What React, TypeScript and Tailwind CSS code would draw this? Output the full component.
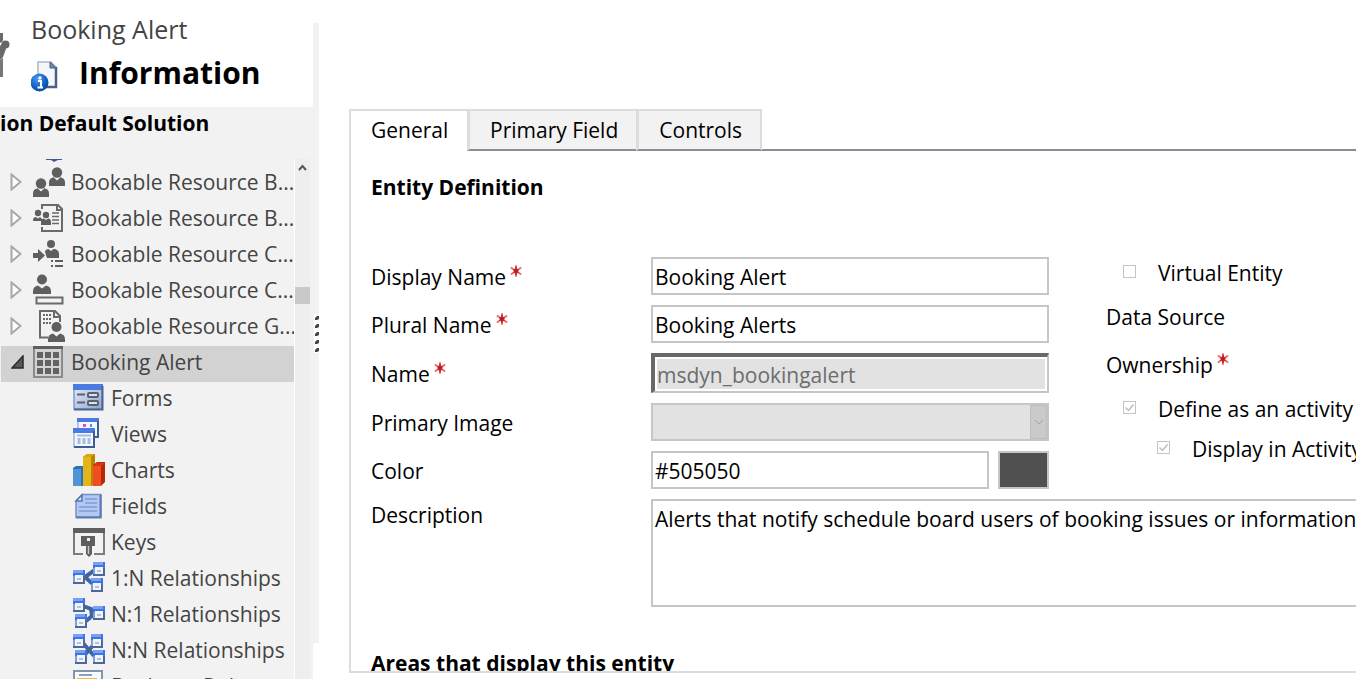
import { useState } from "react"
import type { ReactNode } from "react"

interface TreeItem {
  label: string
  icon: ReactNode
}

function Person({ x, y }: { x: number; y: number }) {
  return (
    <g transform={`translate(${x} ${y})`} fill="#5f5f5f">
      <circle cx="8" cy="5.500" r="5.200" />
      <path d="M0 19v-3.500c0-3 1.500-4.500 4.500-5.200L8 13.500l3.500-3.200c3 .7 4.500 2.200 4.500 5.200V19z" />
    </g>
  )
}

function BookingIcon() {
  return (
    <svg viewBox="0 0 32 32" className="size-8 shrink-0" aria-hidden="true">
      <Person x={16} y={1} />
      <Person x={0} y={12} />
    </svg>
  )
}

function BookingHeaderIcon() {
  return (
    <svg viewBox="0 0 32 32" className="size-8 shrink-0" aria-hidden="true">
      <path d="M9 7V3h16l4 4v22H9v-4M24 3v5h5" fill="none" stroke="#6a6a6a" strokeWidth="2" />
      <path d="M19 11h7M19 14.500h7M19 18h7M19 21.500h7" stroke="#6a6a6a" strokeWidth="1.500" />
      <g fill="#5f5f5f">
        <circle cx="5" cy="11" r="3.200" />
        <circle cx="13" cy="13" r="3.200" />
        <path d="M0 19c0-3 1-4 3-4l2 1.500L7 15l2 2-1 2H0zM8 23v-3c0-2 1-3.500 3-3.500l2 1.500 2-1.500c2 0 3 1.500 3 3.500v3z" />
      </g>
    </svg>
  )
}

function CategoryAssnIcon() {
  return (
    <svg viewBox="0 0 32 32" className="size-8 shrink-0" aria-hidden="true">
      <g fill="#5f5f5f">
        <circle cx="18" cy="6" r="4" />
        <path d="M12 14c0-2 2-3 3.500-3L18 13l2.500-2c3 0 5.500 1.500 5.500 5v4H14z" />
        <path d="M0 15h5v-4l7 6.500-7 6.500v-4H0z" />
        <path d="M18 22h2v2h-2zM22 22h8v2h-8zM18 27h2v2h-2zM22 27h8v2h-8z" />
      </g>
    </svg>
  )
}

function CategoryIcon() {
  return (
    <svg viewBox="0 0 32 32" className="size-8 shrink-0" aria-hidden="true">
      <circle cx="9" cy="5.500" r="5" fill="#5f5f5f" />
      <path d="M0 20v-3c0-3 2-5 5-5.500l4 3 4-3c3 .5 5 2.500 5 5.500v3z" fill="#5f5f5f" />
      <rect x="3.500" y="23.500" width="26" height="6" fill="#f2f2f2" stroke="#6a6a6a" strokeWidth="2" />
    </svg>
  )
}

function GroupIcon() {
  return (
    <svg viewBox="0 0 32 32" className="size-8 shrink-0" aria-hidden="true">
      <path d="M15 27.500H7V1h15l5 5v6M21 1v6h6" fill="none" stroke="#6a6a6a" strokeWidth="2" />
      <path d="M10 5h8M10 9h8M10 13h8" stroke="#6a6a6a" strokeWidth="2" strokeDasharray="2 1" />
      <circle cx="23.500" cy="17" r="5" fill="#5f5f5f" />
      <path d="M15 32v-3c0-3 2-5 5-5.500l3.500 3 3.500-3c3 .5 5 2.500 5 5.500v3z" fill="#5f5f5f" />
    </svg>
  )
}

function EntityIcon() {
  return (
    <svg viewBox="0 0 32 32" className="size-8 shrink-0" aria-hidden="true">
      <rect x="1" y="1" width="28" height="30" fill="none" stroke="#8a8a8a" strokeWidth="2" />
      <rect x="0" y="0" width="30" height="3" fill="#5f5f5f" />
      <g fill="#626262">
        <path d="M4 6h6v6H4zM12 6h6v6h-6zM20 6h6v6h-6zM4 14h6v6H4zM12 14h6v6h-6zM20 14h6v6h-6zM4 22h6v6H4zM12 22h6v6h-6zM20 22h6v6h-6z" />
      </g>
    </svg>
  )
}

function FormsIcon() {
  return (
    <svg viewBox="0 0 32 32" className="size-8 shrink-0" aria-hidden="true">
      <defs>
        <linearGradient id="form-body" x2="1" y2="1">
          <stop offset="0" stopColor="#e6edf9" />
          <stop offset="1" stopColor="#8fa5d0" />
        </linearGradient>
      </defs>
      <rect x="1" y="3" width="28" height="24" fill="url(#form-body)" stroke="#7f9bcf" strokeWidth="1.500" />
      <rect x="0" y="2" width="30" height="6" fill="#4a7be0" />
      <path d="M1 27.500h28.500V4" fill="none" stroke="#4a6294" strokeWidth="2" />
      <path d="M4 12.500h8M4 20.500h8" stroke="#59616e" strokeWidth="2" />
      <rect x="15" y="11" width="10" height="4" rx="1" fill="#dde3ec" stroke="#59616e" strokeWidth="2" />
      <rect x="15" y="19" width="10" height="4" rx="1" fill="#dde3ec" stroke="#59616e" strokeWidth="2" />
    </svg>
  )
}

function ViewsIcon() {
  return (
    <svg viewBox="0 0 32 32" className="size-8 shrink-0" aria-hidden="true">
      <rect x="5" y="1" width="20" height="18" fill="#f3f7ff" stroke="#7595cf" />
      <rect x="4" y="0" width="22" height="4" fill="#4a7be0" />
      <path d="M25 3v16h-4" fill="none" stroke="#405d93" strokeWidth="2" />
      <rect x="10" y="6" width="3" height="3" fill="#ef47cf" />
      <path d="M18 9V6" stroke="#4b8ff0" strokeWidth="2" />
      <rect x="1" y="11" width="20" height="18" fill="#f3f7ff" stroke="#7595cf" />
      <rect x="0" y="10" width="22" height="5" fill="#4a7be0" />
      <path d="M1 29h20V13" fill="none" stroke="#405d93" strokeWidth="2" />
      <path d="M4 17.500h14" stroke="#a8bddd" strokeWidth="2" />
      <path d="M6 20v6M11 20v6M16 20v6" stroke="#a8bddd" strokeWidth="3" />
    </svg>
  )
}

function ChartsIcon() {
  return (
    <svg viewBox="0 0 32 32" className="size-8 shrink-0" aria-hidden="true">
      <path d="M0 14l3-2h8v20H0z" fill="#2c6fb8" />
      <path d="M0 15h8v17H0z" fill="#4f95d8" />
      <path d="M10 3l4-3h8v29l-3 3h-9z" fill="#b98300" />
      <path d="M10 3h8v29h-8z" fill="#e0b618" />
      <path d="M10 3l4-3h8l-4 3z" fill="#d9a70b" />
      <path d="M20 11l4-3h8v20l-4 4h-8z" fill="#b72808" />
      <path d="M20 12h8v20h-8z" fill="#f24c22" />
      <path d="M20 12l4-3h8l-4 3z" fill="#d83a14" />
    </svg>
  )
}

function FieldsIcon() {
  return (
    <svg viewBox="0 0 32 32" className="size-8 shrink-0" aria-hidden="true">
      <path d="M9 4.500h19V27H3V11z" fill="#b3c8f0" stroke="#7690c5" strokeWidth="1.500" />
      <path d="M3 27.500h24.500V5" fill="none" stroke="#5d79b3" strokeWidth="2" />
      <path d="M3 11h6V5z" fill="#e3ebfa" stroke="#5876b4" strokeWidth="1.500" />
      <path d="M12 9h12M12 13h12M6 17h18M6 21h18" stroke="#7e9ad4" strokeWidth="1.500" />
    </svg>
  )
}

function KeysIcon() {
  return (
    <svg viewBox="0 0 32 32" className="size-8 shrink-0" aria-hidden="true">
      <path d="M10 28H1V4h30v24H21" fill="none" stroke="#7c7c7c" strokeWidth="2" />
      <rect x="0" y="2" width="32" height="5" fill="#5f5f5f" />
      <path d="M8 10h14v10h-3v8l-3 3-3-3v-8H8z" fill="#5f5f5f" />
      <rect x="14" y="12" width="3" height="3" fill="#f2f2f2" />
      <path d="M15.500 20v8" stroke="#c5c5c5" strokeWidth="1.500" />
    </svg>
  )
}

function RelationBox({ x, y }: { x: number; y: number }) {
  return (
    <g transform={`translate(${x} ${y})`}>
      <rect width="12" height="14" fill="#4c6798" />
      <rect width="12" height="6" fill="#3f74e6" />
      <rect width="10" height="3" fill="#78a0f5" />
      <rect y="6" width="2" height="6" fill="#7f9ed6" />
      <rect x="2" y="5" width="8" height="7" fill="#f1f5fc" />
      <rect x="4" y="8" width="4" height="2" fill="#b4c1da" />
    </g>
  )
}

function RelationIcon({ links, boxes }: { links: string; boxes: number[][] }) {
  return (
    <svg viewBox="0 0 32 32" className="size-8 shrink-0" aria-hidden="true">
      <path d={links} stroke="#41639f" strokeWidth="4" fill="none" />
      {boxes.map(([x, y]) => (
        <RelationBox key={`${x}-${y}`} x={x} y={y} />
      ))}
    </svg>
  )
}

function RulesIcon() {
  return (
    <svg viewBox="0 0 32 32" className="size-8 shrink-0" aria-hidden="true">
      <rect x="1" y="1" width="28" height="30" fill="#f7faff" stroke="#8195ad" strokeWidth="2" />
      <path d="M6 5h13" stroke="#8da0b8" strokeWidth="2" />
      <path d="M4 9.500h20" stroke="#f4b45e" strokeWidth="3" />
    </svg>
  )
}

function InfoDocIcon() {
  return (
    <svg viewBox="0 0 28 32" className="mt-2 h-8 w-7 shrink-0" aria-hidden="true">
      <defs>
        <radialGradient id="info-ball" cx="40%" cy="30%" r="75%">
          <stop offset="0" stopColor="#4a9cf0" />
          <stop offset="0.600" stopColor="#1262c4" />
          <stop offset="1" stopColor="#0a4690" />
        </radialGradient>
      </defs>
      <path d="M7 1h13l5 5v20H7z" fill="#f4f7fb" stroke="#a9b8cb" strokeWidth="1.500" />
      <path d="M25 6v20H14" fill="none" stroke="#4a607f" strokeWidth="2.500" />
      <path d="M19 1v6h6z" fill="#7489a5" stroke="#4a607f" />
      <circle cx="8.500" cy="21.500" r="9" fill="url(#info-ball)" />
      <circle cx="9" cy="17" r="1.700" fill="#fff" />
      <path d="M7 20h3v6M6.500 26.500h5.500" fill="none" stroke="#fff" strokeWidth="2" />
    </svg>
  )
}

function Required() {
  return (
    <svg viewBox="0 0 12 12" className="mb-3 ml-1 size-3" role="img" aria-label="required">
      <path d="M6 1v10M1.500 3l9 6M10.500 3l-9 6" stroke="#e0706a" strokeWidth="2" strokeLinecap="round" />
      <path d="M6 2v8M3.500 4.500l5 3M8.500 4.500l-5 3" stroke="#c4161c" strokeWidth="1.500" />
    </svg>
  )
}

const entities: TreeItem[] = [
  { label: "Bookable Resource B...", icon: <BookingIcon /> },
  { label: "Bookable Resource B...", icon: <BookingHeaderIcon /> },
  { label: "Bookable Resource C...", icon: <CategoryAssnIcon /> },
  { label: "Bookable Resource C...", icon: <CategoryIcon /> },
  { label: "Bookable Resource G...", icon: <GroupIcon /> },
]

const components: TreeItem[] = [
  { label: "Forms", icon: <FormsIcon /> },
  { label: "Views", icon: <ViewsIcon /> },
  { label: "Charts", icon: <ChartsIcon /> },
  { label: "Fields", icon: <FieldsIcon /> },
  { label: "Keys", icon: <KeysIcon /> },
  {
    label: "1:N Relationships",
    icon: <RelationIcon links="M12 15l10-7M12 15l10 9" boxes={[[0, 8], [20, 0], [18, 16]]} />,
  },
  {
    label: "N:1 Relationships",
    icon: <RelationIcon links="M10 8l8 3 1 7-6 5M17 14h6" boxes={[[0, 0], [2, 16], [20, 8]]} />,
  },
  {
    label: "N:N Relationships",
    icon: <RelationIcon links="M9 8l14 16M23 8L9 24" boxes={[[0, 0], [18, 0], [2, 16], [20, 16]]} />,
  },
  { label: "Business Rules", icon: <RulesIcon /> },
]

const tabs = ["General", "Primary Field", "Controls"]

function Sidebar() {
  return (
    <aside className="flex w-[313px] shrink-0 flex-col">
      <header className="flex h-[107px] shrink-0 items-start pt-3">
        <svg viewBox="0 0 10 46" className="mt-5 h-[46px] w-[10px] shrink-0" aria-hidden="true">
          <path d="M0 1h3v7l-1 2-2 1zM0 14l3-4 3 7-3 8-3 3z" fill="#6a6a6a" />
          <circle cx="5.500" cy="12.500" r="4" fill="#666" />
          <path d="M0 28l3-2v19H0z" fill="#777" />
        </svg>
        <div className="ml-[21px]">
          <p className="text-[25px] leading-[34px] text-[#444]">Booking Alert</p>
          <div className="flex items-center gap-5">
            <InfoDocIcon />
            <h1 className="text-[30px] leading-[54px] font-bold">Information</h1>
          </div>
        </div>
      </header>
      <div className="flex min-h-0 flex-1 flex-col bg-[#f2f2f2]">
        <h2 className="h-[52px] shrink-0 text-[21px] leading-8 font-bold whitespace-nowrap">
          ion Default Solution
        </h2>
        <div className="flex min-h-0 flex-1">
          <nav className="min-w-0 flex-1 overflow-hidden text-[21px] leading-8 text-[#444]">
            <svg viewBox="0 0 20 7" className="ml-[45px] h-[7px] w-5" aria-hidden="true">
              <path d="M1 0h16v1H13l-4 2-3-2H1z" fill="#44598f" />
            </svg>
            <ul>
              {entities.map((item, index) => (
                <li key={index}>
                  <a href="#" className="flex h-9 items-center pb-1 whitespace-nowrap">
                    <svg viewBox="0 0 12 18" className="mr-[11px] ml-[10px] h-[18px] w-3 shrink-0" aria-hidden="true">
                      <path d="M1.500 1.500v15l9-7.500z" fill="#fbfbfb" stroke="#a8a8a8" strokeWidth="2" />
                    </svg>
                    {item.icon}
                    <span className="ml-[6px]">{item.label}</span>
                  </a>
                </li>
              ))}
              <li>
                <a href="#" className="ml-px flex h-9 items-center bg-[#d2d2d2] pb-1 whitespace-nowrap">
                  <svg viewBox="0 0 14 14" className="mr-2 ml-[10px] h-[14px] w-[14px] shrink-0" aria-hidden="true">
                    <path d="M12 1v12H1z" fill="#585858" stroke="#2a2a2a" strokeWidth="1.500" />
                  </svg>
                  <EntityIcon />
                  <span className="ml-[6px]">Booking Alert</span>
                </a>
                <ul className="pl-[73px]">
                  {components.map((item) => (
                    <li key={item.label}>
                      <a href="#" className="flex h-9 items-center gap-[6px] pb-1 whitespace-nowrap">
                        {item.icon}
                        {item.label}
                      </a>
                    </li>
                  ))}
                </ul>
              </li>
            </ul>
          </nav>
          <div className="mr-[3px] flex w-4 shrink-0 flex-col border-l border-white bg-[#eee]">
            <svg viewBox="0 0 15 17" className="h-[17px] w-[15px]" aria-hidden="true">
              <path d="M4 11l3.500-4L11 11" fill="none" stroke="#555" strokeWidth="2" />
            </svg>
            <div className="mt-[111px] h-[17px] bg-[#c9c9c9]" />
          </div>
        </div>
      </div>
    </aside>
  )
}

function Splitter() {
  return (
    <div className="mt-[23px] mb-9 flex w-[6px] shrink-0 flex-col items-end bg-[#f2f2f2] pt-[291px]">
      <svg viewBox="0 0 5 39" className="h-[39px] w-[5px]" aria-hidden="true">
        <rect width="5" height="39" fill="#fff" />
        {[2, 10, 18, 26, 34].map((y) => (
          <path key={y} d={`M1 ${y + 4}v-2l2-2h2v3l-2 1z`} fill="#444" />
        ))}
      </svg>
    </div>
  )
}

interface FieldRowProps {
  id: string
  label: string
  required?: boolean
  children: ReactNode
}

function FieldRow({ id, label, required, children }: FieldRowProps) {
  return (
    <div className="flex items-center">
      <label htmlFor={id} className="flex w-[280px] shrink-0 items-center pt-[2px]">
        {label}
        {required && <Required />}
      </label>
      {children}
    </div>
  )
}

interface CheckRowProps {
  label: string
  checked?: boolean
  nested?: boolean
}

function CheckRow({ label, checked, nested }: CheckRowProps) {
  return (
    <label className={`flex h-10 items-center whitespace-nowrap ${nested ? "pl-[51px]" : "pl-[17px]"}`}>
      <span className="mb-1 grid shrink-0">
        <input
          type="checkbox"
          disabled
          defaultChecked={checked}
          className="col-start-1 row-start-1 size-[13px] appearance-none border border-[#c4c4c4] bg-white"
        />
        {checked && (
          <svg viewBox="0 0 13 13" className="col-start-1 row-start-1 size-[13px]" aria-hidden="true">
            <path d="M2.500 6.500l3 3 5-6" fill="none" stroke="#bdbdbd" strokeWidth="1.500" />
          </svg>
        )}
      </span>
      <span className="ml-[22px]">{label}</span>
    </label>
  )
}

function App() {
  const [activeTab, setActiveTab] = useState("General")
  const [displayName, setDisplayName] = useState("Booking Alert")
  const [pluralName, setPluralName] = useState("Booking Alerts")
  const [color, setColor] = useState("#505050")
  const [description, setDescription] = useState(
    "Alerts that notify schedule board users of booking issues or information."
  )

  return (
    <div className="flex h-screen overflow-hidden bg-white font-['Segoe_UI','Open_Sans',sans-serif] text-black">
      <Sidebar />
      <Splitter />
      <main className="ml-[30px] flex min-w-0 flex-1 flex-col pt-[109px] pb-[6px] text-[21px] leading-8">
        <div role="tablist" className="flex h-[42px] shrink-0">
          {tabs.map((tab) => (
            <button
              key={tab}
              role="tab"
              aria-selected={tab === activeTab}
              onClick={() => setActiveTab(tab)}
              className={
                tab === activeTab
                  ? "w-[118px] border-t-2 border-l-2 border-[#dcdcdc] bg-white px-5 pb-[2px] text-left whitespace-nowrap"
                  : "border-t-2 border-b-2 border-l-[3px] border-t-[#dcdcdc] border-b-[#8b8b99] border-l-[#dcdcdc] bg-[#f2f2f2] pr-[18px] pl-5 whitespace-nowrap last-of-type:border-r-2 last-of-type:border-r-[#dcdcdc]"
              }
            >
              {tab}
            </button>
          ))}
          <div className="flex-1 border-b-2 border-[#8b8b99]" />
        </div>
        <section className="min-h-0 flex-1 overflow-hidden border-b-2 border-l-2 border-[#dcdcdc] pt-5 pl-5">
          <h3 className="font-bold">Entity Definition</h3>
          <div className="mt-[50px] flex">
            <div className="flex w-[678px] shrink-0 flex-col gap-[10px] pt-1">
              <FieldRow id="display-name" label="Display Name" required>
                <input
                  id="display-name"
                  value={displayName}
                  onChange={(e) => setDisplayName(e.target.value)}
                  className="h-[38px] min-w-0 flex-1 border-2 border-[#c6c6c6] px-[2px] pt-[2px]"
                />
              </FieldRow>
              <FieldRow id="plural-name" label="Plural Name" required>
                <input
                  id="plural-name"
                  value={pluralName}
                  onChange={(e) => setPluralName(e.target.value)}
                  className="h-[38px] min-w-0 flex-1 border-2 border-[#c6c6c6] px-[2px] pt-[2px]"
                />
              </FieldRow>
              <FieldRow id="name" label="Name" required>
                <div className="flex h-10 min-w-0 flex-1 border-t-4 border-r-2 border-b-2 border-l-4 border-t-[#696969] border-r-[#c6c6c6] border-b-[#c6c6c6] border-l-[#696969] p-[2px]">
                  <input
                    id="name"
                    disabled
                    defaultValue="msdyn_bookingalert"
                    className="min-w-0 flex-1 bg-[#e2e2e2] pt-[2px] text-[#6d6d6d]"
                  />
                </div>
              </FieldRow>
              <FieldRow id="primary-image" label="Primary Image">
                <div className="grid h-[38px] min-w-0 flex-1">
                  <select
                    id="primary-image"
                    disabled
                    className="col-start-1 row-start-1 appearance-none border-2 border-[#c6c6c6] bg-[#e2e2e2]"
                  />
                  <span className="col-start-1 row-start-1 m-[2px] flex w-[17px] items-center justify-center justify-self-end border border-[#bfbfbf] bg-[#cacaca]">
                    <svg viewBox="0 0 10 6" className="h-[6px] w-[10px]" aria-hidden="true">
                      <path d="M1 1l4 4 4-4" fill="none" stroke="#a3a3a3" />
                    </svg>
                  </span>
                </div>
              </FieldRow>
              <FieldRow id="color" label="Color">
                <input
                  id="color"
                  value={color}
                  onChange={(e) => setColor(e.target.value)}
                  className="h-[38px] min-w-0 flex-1 border-2 border-[#c6c6c6] px-[2px] pt-[2px]"
                />
                <button
                  aria-label="Pick a color"
                  className="ml-[9px] h-[38px] w-[51px] border-2 border-[#c6c6c6]"
                  style={{ backgroundColor: color }}
                />
              </FieldRow>
            </div>
            <div className="ml-[57px] min-w-0 flex-1">
              <CheckRow label="Virtual Entity" />
              <p className="flex h-12 items-center">Data Source</p>
              <p className="flex h-12 items-center">
                Ownership
                <Required />
              </p>
              <CheckRow label="Define as an activity" checked />
              <CheckRow label="Display in Activity" checked nested />
            </div>
          </div>
          <div className="mt-[10px] flex">
            <label htmlFor="description" className="w-[280px] shrink-0">
              Description
            </label>
            <textarea
              id="description"
              value={description}
              onChange={(e) => setDescription(e.target.value)}
              className="h-[108px] min-w-0 flex-1 resize-none overflow-hidden border-t-2 border-b-2 border-l-2 border-[#c6c6c6] pt-[2px] pl-[2px] whitespace-nowrap"
            />
          </div>
          <h3 className="mt-10 font-bold">Areas that display this entity</h3>
        </section>
      </main>
    </div>
  )
}

export default App
